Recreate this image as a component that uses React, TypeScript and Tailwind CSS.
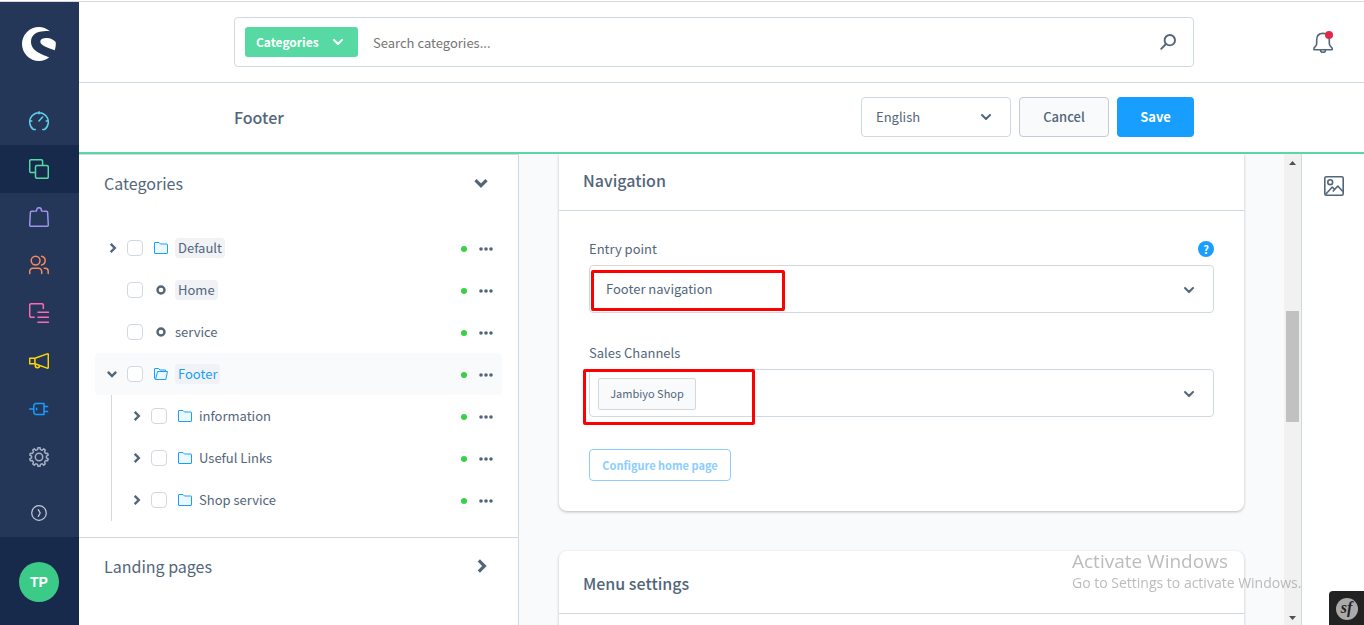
import React, { useState } from 'react';

type IconProps = { className?: string };

function Logo() {
  return (
    <svg viewBox="0 0 102 102" className="w-[34px] h-[34px]" fill="#fff" aria-hidden="true">
      <path d="M84 13C74 4 62 0 51 0a51 51 0 0 0 0 102c12 0 23-4 31-11C63 83 27 73 27 44c0-20 17-31 38-31 7-1 13-1 19 0Z" />
      <path d="M55 44c0-8 9-11 19-11 12 0 21 6 27 12 1 9 0 17-3 25-15-7-43-13-43-26Z" />
    </svg>
  );
}

function NavIcon({ color, children }: { color: string; children: React.ReactNode }) {
  return (
    <svg
      viewBox="0 0 20 20"
      className="w-5 h-5"
      fill="none"
      stroke={color}
      strokeWidth="1.5"
      strokeLinecap="round"
      strokeLinejoin="round"
      aria-hidden="true"
    >
      {children}
    </svg>
  );
}

// Outline of a cog with evenly spaced teeth
function gearPath(teeth: number, outer: number, inner: number) {
  const points: string[] = [];
  const step = (Math.PI * 2) / teeth;
  for (let i = 0; i < teeth; i++) {
    const mid = i * step - Math.PI / 2;
    const corners = [
      [inner, -0.3],
      [outer, -0.17],
      [outer, 0.17],
      [inner, 0.3],
    ];
    corners.forEach(([r, offset]) => {
      const angle = mid + offset * step;
      points.push(`${(10 + r * Math.cos(angle)).toFixed(2)} ${(10 + r * Math.sin(angle)).toFixed(2)}`);
    });
  }
  return `M${points.join('L')}Z`;
}

const navItems = [
  {
    label: 'Dashboard',
    color: '#5ed1ec',
    icon: <path d="M6.3 18.6H4.6a9.3 9.3 0 1 1 10.8 0h-1.7M10 .8v2M.8 10h2M17.2 10h2M10 10l3.6-4" />,
  },
  {
    label: 'Catalogues',
    color: '#57d9a3',
    active: true,
    icon: (
      <>
        <path d="M6 13.6H2.2A1.5 1.5 0 0 1 .7 12.1V2.2A1.5 1.5 0 0 1 2.2.7h9.9a1.5 1.5 0 0 1 1.5 1.5V6" />
        <rect x="6.5" y="6.5" width="12.8" height="12.8" rx="1.5" />
      </>
    ),
  },
  {
    label: 'Orders',
    color: '#a092f0',
    icon: (
      <path d="M5.2 4.2H2.6c-.7 0-1.2.5-1.2 1.1L.7 17.9c0 .8.5 1.4 1.3 1.4h16c.8 0 1.3-.6 1.3-1.4l-.7-12.6c0-.6-.5-1.1-1.2-1.1h-2.6M7 4.5V3.6h.6C7.6 1.6 8.5.7 10 .7s2.4.9 2.4 2.9h.6v.9" />
    ),
  },
  {
    label: 'Customers',
    color: '#f88962',
    icon: (
      <>
        <circle cx="6.6" cy="5.6" r="4.4" />
        <path d="M.7 18.6v-2.3a3 3 0 0 1 3-3h6a3 3 0 0 1 3 3v2.3M12.6 1.2a4.5 4.5 0 0 1 0 8.8M15.2 13.3h1a3 3 0 0 1 3 3v2.3" />
      </>
    ),
  },
  {
    label: 'Content',
    color: '#ff68b4',
    icon: <path d="M5.2 14.3h-3a1.5 1.5 0 0 1-1.5-1.5V2.2A1.5 1.5 0 0 1 2.2.7h10.6a1.5 1.5 0 0 1 1.5 1.5v3.2M9 9.3h10.4M9 14.3h10.4M9 19.3h10.4" />,
  },
  {
    label: 'Marketing',
    color: '#ffd700',
    icon: (
      <path d="M.7 7.3h5.2v5.5H.7ZM5.9 7.3l12.3-4.4c.6-.2 1.1.1 1.1.7v12.8c0 .6-.5.9-1.1.7L5.9 12.8M6.3 13.2v1.6c0 1 .8 1.9 1.9 1.9h.4c1 0 1.9-.8 1.9-1.9" />
    ),
  },
  {
    label: 'Extensions',
    color: '#189eff',
    icon: <path d="M.7 10h4.1M7 4.6h8v10.800H7a2.200 2.200 0 0 1-2.200-2.200V6.800A2.200 2.200 0 0 1 7 4.600ZM15 7.500h3.600M15 12.500h3.600M7.600 9.300v1.400" />,
  },
  {
    label: 'Settings',
    color: '#a3b1c2',
    icon: (
      <>
        <path d={gearPath(10, 9.4, 7.5)} />
        <circle cx="10" cy="10" r="3.7" />
      </>
    ),
  },
];

function ChevronDown({ className = 'w-3 h-3' }: IconProps) {
  return (
    <svg viewBox="0 0 12 12" className={className} fill="none" stroke="currentColor" strokeWidth="2" strokeLinecap="round" strokeLinejoin="round" aria-hidden="true">
      <path d="M2 4l4 4 4-4" />
    </svg>
  );
}

// Heavier chevron used for collapsible sections and open tree nodes
function ChevronDownBold({ className = 'w-3 h-3' }: IconProps) {
  return (
    <svg viewBox="0 0 12 12" className={className} fill="none" stroke="currentColor" strokeWidth="2.4" strokeLinecap="square" aria-hidden="true">
      <path d="M2.7 4.7 6 8l3.3-3.3" />
    </svg>
  );
}

function ChevronRight({ className = 'w-3 h-3' }: IconProps) {
  return (
    <svg viewBox="0 0 12 12" className={className} fill="none" stroke="currentColor" strokeWidth="2.4" strokeLinecap="square" aria-hidden="true">
      <path d="M4.5 2.7 7.8 6 4.5 9.3" />
    </svg>
  );
}

function Folder({ open }: { open?: boolean }) {
  return (
    <svg viewBox="0 0 14 12" className="w-3.5 h-3" fill="#edf7ff" stroke="#189eff" strokeLinejoin="round" aria-hidden="true">
      {open ? (
        <>
          <path d="M1.5 11.5l-1-1V1C.5.7.7.5 1 .5h3.5L6 2h5.5v1.5" />
          <path d="M3.6 3.5h9.9l-1.7 8H1.5Z" />
        </>
      ) : (
        <path d="M.5 1C.5.7.7.5 1 .5h4L6.5 2H13c.3 0 .5.2.5.5V11c0 .3-.2.5-.5.5H1c-.3 0-.5-.2-.5-.5Z" />
      )}
    </svg>
  );
}

function Ring() {
  return (
    <svg viewBox="0 0 10 10" className="w-2.5 h-2.5" fill="none" stroke="currentColor" strokeWidth="2.4" aria-hidden="true">
      <circle cx="5" cy="5" r="3.5" />
    </svg>
  );
}

function Dots() {
  return (
    <svg viewBox="0 0 14 4" className="w-3.5 h-1" fill="currentColor" aria-hidden="true">
      <circle cx="2" cy="2" r="1.8" />
      <circle cx="7" cy="2" r="1.8" />
      <circle cx="12" cy="2" r="1.8" />
    </svg>
  );
}

type Category = {
  name: string;
  kind: 'folder' | 'page';
  entry?: boolean;
  open?: boolean;
  children?: Category[];
};

const categories: Category[] = [
  { name: 'Default', kind: 'folder', entry: true },
  { name: 'Home', kind: 'page', entry: true },
  { name: 'service', kind: 'page' },
  {
    name: 'Footer',
    kind: 'folder',
    entry: true,
    open: true,
    children: [
      { name: 'information', kind: 'folder' },
      { name: 'Useful Links', kind: 'folder' },
      { name: 'Shop service', kind: 'folder' },
    ],
  },
];

function TreeItem({ item }: { item: Category }) {
  return (
    <li>
      <div className={`flex items-center h-[42px] pl-3 pr-[9px] rounded ${item.open ? 'bg-[#f9fafc]' : ''}`}>
        <div className="w-5 flex">
          {item.kind === 'folder' && (
            <button aria-label={`Toggle ${item.name}`}>
              {item.open ? <ChevronDownBold className="w-3 h-3 -ml-px" /> : <ChevronRight />}
            </button>
          )}
        </div>
        <input
          type="checkbox"
          aria-label={item.name}
          className="appearance-none w-4 h-4 rounded border border-[#d1d9e0] bg-white checked:bg-[#189eff]"
        />
        <span className="w-8 pl-1 flex justify-center">
          {item.kind === 'folder' ? <Folder open={item.open} /> : <Ring />}
        </span>
        <a
          href="#"
          className={`leading-5 text-[13px] rounded ${item.entry ? 'bg-[#f0f2f5] px-[3px]' : ''} ${item.open ? 'text-[#189eff]' : ''}`}
        >
          {item.name}
        </a>
        <div className="ml-auto pt-0.5 flex items-center gap-3">
          <span className="w-1.5 h-1.5 rounded-full bg-[#37d046]" />
          <button className="flex" aria-label={`Actions for ${item.name}`}>
            <Dots />
          </button>
        </div>
      </div>
      {item.children && (
        <ul className="ml-4 pl-[7px] border-l border-[#d1d9e0]">
          {item.children.map((child) => (
            <TreeItem key={child.name} item={child} />
          ))}
        </ul>
      )}
    </li>
  );
}

function Sidebar() {
  return (
    <aside className="w-[79px] shrink-0 bg-[#243758] flex flex-col">
      <div className="h-[95px] pt-[25px] pr-px flex justify-center">
        <Logo />
      </div>
      <nav className="flex-1">
        {navItems.map((item) => (
          <a
            key={item.label}
            href="#"
            aria-label={item.label}
            className={`h-12 pr-px flex items-center justify-center ${item.active ? 'bg-[#182a4c]' : ''}`}
          >
            <NavIcon color={item.color}>{item.icon}</NavIcon>
          </a>
        ))}
      </nav>
      <button className="h-12 pr-px flex items-center justify-center" aria-label="Collapse menu">
        <svg viewBox="0 0 16 16" className="w-4 h-4" fill="none" stroke="#c3cdd9" strokeWidth="1.2" strokeLinecap="round" aria-hidden="true">
          <circle cx="8" cy="8" r="7.3" />
          <path d="M7.3 4.6 9.2 8l-1.9 3.4" />
        </svg>
      </button>
      <div className="h-[88px] pr-px pt-0.5 bg-[#182a4c] flex items-center justify-center">
        <button className="w-10 h-10 rounded-full bg-[#3cca88] text-white text-sm font-bold font-['Liberation_Sans',sans-serif]">
          TP
        </button>
      </div>
    </aside>
  );
}

function SearchBar() {
  return (
    <header className="h-[81px] flex items-center pl-[155px] pr-[30px] border-b border-[#d1d9e0]">
      <div className="flex-1 h-[50px] flex items-center pl-2.5 pr-[17px] border border-[#d1d9e0] rounded">
        <button className="h-[30px] w-[113px] pl-[11px] pr-3.5 rounded-[3px] bg-[#57d9a3] text-white text-xs font-bold flex items-center justify-between">
          Categories
          <ChevronDown />
        </button>
        <input
          type="search"
          aria-label="Search categories"
          placeholder="Search categories..."
          className="flex-1 ml-[15px] h-10 text-[13px] outline-none placeholder:text-[#757575]"
        />
        <button aria-label="Search">
          <svg viewBox="0 0 16 16" className="w-4 h-4" fill="none" stroke="currentColor" strokeWidth="1.9" strokeLinecap="round" aria-hidden="true">
            <circle cx="9.8" cy="6.2" r="5.2" />
            <path d="M6 10l-4.8 4.8" />
          </svg>
        </button>
      </div>
      <button className="ml-[118px] relative" aria-label="Notifications">
        <svg viewBox="0 0 22 22" className="w-[22px] h-[22px]" fill="none" stroke="currentColor" strokeWidth="1.6" strokeLinejoin="round" aria-hidden="true">
          <path d="M2 17.9v-.8l1.7-2c.7-.9 1-2 1-3.2V8.700c0-3.700 2.300-6.300 6.300-6.300s6.300 2.600 6.300 6.300v3.200c0 1.200.3 2.300 1 3.200l1.900 2.200v.9c0 .3-.2.500-.5.500H1.900Z" />
          <path d="M8.5 18.9a2.500 2.500 0 0 0 5 0" />
        </svg>
        <span className="absolute top-0 right-px w-2 h-2 rounded-full bg-[#de294c]" />
      </button>
    </header>
  );
}

function SmartBar() {
  return (
    <div className="h-[71px] flex items-center gap-2 pb-px pl-[155px] pr-[170px] border-b-2 border-[#57d9a3]">
      <h1 className="flex-1 text-base font-medium">Footer</h1>
      <div className="relative w-[150px]">
        <select aria-label="Language" className="appearance-none w-full h-10 px-3.5 text-[13px] bg-white border border-[#d1d9e0] rounded">
          <option>English</option>
        </select>
        <ChevronDown className="w-3 h-3 absolute right-[19px] top-3.5 pointer-events-none" />
      </div>
      <button className="w-[90px] h-10 text-[13px] font-medium bg-[#f9fafc] border border-[#c2cbd6] rounded">Cancel</button>
      <button className="w-[77px] h-10 text-[13px] font-bold text-white bg-[#189eff] rounded">Save</button>
    </div>
  );
}

function CategoryPanel() {
  return (
    <section className="w-[440px] shrink-0 border-t border-r border-[#d1d9e0] bg-white">
      <button className="w-full h-[58px] pb-0.5 pl-[25px] pr-[29px] flex items-center justify-between text-base">
        Categories
        <ChevronDownBold className="w-4 h-4" />
      </button>
      <ul className="px-4 pt-3.5 pb-4">
        {categories.map((item) => (
          <TreeItem key={item.name} item={item} />
        ))}
      </ul>
      <button className="w-full h-[58px] pb-0.5 pl-[25px] pr-7 flex items-center justify-between text-base border-t border-[#d1d9e0]">
        Landing pages
        <ChevronRight className="w-4 h-4" />
      </button>
    </section>
  );
}

function NavigationCard() {
  const [entryPoint, setEntryPoint] = useState('Footer navigation');

  return (
    <div className="bg-white rounded-b-lg shadow-[0_1px_3px_rgba(0,0,0,0.25)]">
      <h2 className="h-[57px] px-6 pb-1 flex items-center text-base font-medium border-b border-[#d1d9e0]">Navigation</h2>
      <div className="p-[30px]">
        <div className="flex items-center justify-between h-4 mb-2">
          <label htmlFor="entryPoint" className="text-[13px]">Entry point</label>
          <button className="w-4 h-4 rounded-full bg-[#189eff] text-white text-[11px] leading-4 font-bold" aria-label="Help">
            ?
          </button>
        </div>
        <div className="relative mb-8">
          <select
            id="entryPoint"
            value={entryPoint}
            onChange={(e) => setEntryPoint(e.target.value)}
            className="appearance-none block w-full h-12 px-4 text-[13px] bg-white border border-[#d1d9e0] rounded"
          >
            <option>Footer navigation</option>
            <option>Main navigation</option>
          </select>
          <ChevronDown className="w-3 h-3 absolute right-[19px] top-[19px] pointer-events-none" />
          <div className="absolute left-0.5 top-[5px] w-[194px] h-[41px] border-3 border-[#ff0000] rounded-[2px] pointer-events-none" />
        </div>

        <div className="flex items-center h-4 mb-2">
          <label htmlFor="salesChannels" className="text-[13px]">Sales Channels</label>
        </div>
        <div className="relative mb-8 h-12 pt-0.5 pl-2 pr-[18px] flex items-center gap-2 border border-[#d1d9e0] rounded">
          <span className="h-8 w-[98px] pb-0.5 flex items-center justify-center text-[11px] bg-[#f9fafc] border border-[#d1d9e0] rounded-[2px]">
            Jambiyo Shop
          </span>
          <input id="salesChannels" type="text" className="flex-1 h-8 text-[13px] outline-none" />
          <ChevronDown />
          <div className="absolute -left-[7px] -top-px w-[172px] h-14 border-3 border-[#ff0000] rounded-[2px] pointer-events-none" />
        </div>

        <button className="block w-[142px] h-8 text-[11px] font-bold text-[#8bceff] border border-[#8bceff] rounded">
          Configure home page
        </button>
      </div>
    </div>
  );
}

function Scrollbar() {
  return (
    <div className="w-[17px] shrink-0 bg-[#f1f1f1] flex flex-col items-center pt-[7px] pb-[5px]" aria-hidden="true">
      <svg viewBox="0 0 7 4" className="w-[7px] h-1" fill="#505050">
        <path d="M3.5 0 7 4H0Z" />
      </svg>
      <div className="w-[13px] h-[111px] mt-[146px] mb-auto bg-[#c1c1c1]" />
      <svg viewBox="0 0 7 4" className="w-[7px] h-1" fill="#505050">
        <path d="M3.5 4 7 0H0Z" />
      </svg>
    </div>
  );
}

export default function App() {
  return (
    <div className="h-screen overflow-hidden flex flex-col pt-px bg-white text-[#52667a] font-['Source_Sans_Pro','Noto_Sans_CJK_SC',sans-serif]">
      <div className="flex-1 min-h-0 flex border-t border-[#d5d9dd]">
        <Sidebar />
        <div className="flex-1 min-w-0 flex flex-col">
          <SearchBar />
          <SmartBar />
          <div className="flex-1 min-h-0 flex">
            <CategoryPanel />
            <main className="flex-1 min-w-0 overflow-hidden bg-[#f9fafc] px-10">
              <NavigationCard />
              <div className="mt-10 h-40 bg-white rounded-t-lg shadow-[0_1px_3px_rgba(0,0,0,0.25)]">
                <h2 className="h-[63px] pt-0.5 px-6 flex items-center text-base font-medium border-b border-[#d1d9e0]">
                  Menu settings
                </h2>
              </div>
            </main>
            <Scrollbar />
            <aside className="w-[63px] shrink-0 flex justify-center pt-[22px] pl-0.5 border-l border-[#d1d9e0]">
              <button className="self-start" aria-label="Media">
                <svg viewBox="0 0 20 20" className="w-5 h-5" fill="none" stroke="currentColor" strokeWidth="1.6" strokeLinejoin="round" aria-hidden="true">
                  <rect x=".8" y=".8" width="18.4" height="18.4" rx="1.5" />
                  <circle cx="6.2" cy="6.2" r="2.4" />
                  <path d="M1.5 18.5 8.3 11l2 2.200M8.800 15.500l5-5.500 5 5.500" />
                </svg>
              </button>
            </aside>
          </div>
        </div>
      </div>

      <div className="fixed left-[1072px] bottom-8 text-[#a0a0a0]/70 font-['Open_Sans',sans-serif] pointer-events-none">
        <p className="text-[19px] leading-6">Activate Windows</p>
        <p className="text-sm leading-5">Go to Settings to activate Windows.</p>
      </div>

      <button className="fixed right-0 bottom-0 w-[35px] h-[34px] pt-0.5 bg-[#222] rounded-tl flex items-center justify-center" aria-label="Symfony toolbar">
        <span className="w-[22px] h-[22px] rounded-full bg-[#aaa] text-[#222] text-base leading-5 font-bold italic font-['Liberation_Serif',serif]">
          sf
        </span>
      </button>
    </div>
  );
}
